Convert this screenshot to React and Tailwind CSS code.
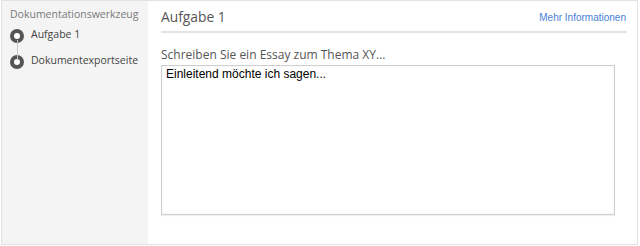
export default function App() {
  return (
    <div className="w-[637px] h-[245px] ml-[1px] flex border border-[#e2e2e2] bg-white" style={{ fontFamily: '"Open Sans", sans-serif' }}>
      <div className="w-[146px] shrink-0 bg-[#f4f4f4] pt-[4px] pl-[8px]">
        <div className="text-[10.5px] leading-[18px] text-[#7a7a7a]">Dokumentationswerkzeug</div>
        <div className="relative mt-[5px]">
          <div className="absolute left-[7px] top-[12px] w-[1px] h-[20px] bg-[#c8c8c8]" />
          <div className="flex items-center h-[16px]">
            <div className="w-[14px] h-[14px] rounded-full border-[4px] border-[#555] bg-white shrink-0" />
            <span className="ml-[7px] text-[10.5px] text-[#444] -mt-[3px]">Aufgabe 1</span>
          </div>
          <div className="flex items-center h-[16px] mt-[10px]">
            <div className="w-[14px] h-[14px] rounded-full border-[4px] border-[#555] bg-white shrink-0" />
            <span className="ml-[7px] text-[10.5px] text-[#444] -mt-[3px]">Dokumentexportseite</span>
          </div>
        </div>
      </div>
      <div className="flex-1 pl-[13px] pr-[10px] pt-[4px]">
        <div className="flex items-center justify-between border-b-2 border-[#e3e3e3] h-[28px]">
          <span className="text-[13.8px] text-[#555] -mt-[1px]">Aufgabe 1</span>
          <span className="text-[10px] text-[#4a7fd4] -mt-[2px] mr-[1px]" style={{ fontFamily: '"Liberation Sans", Arial, sans-serif' }}>Mehr Informationen</span>
        </div>
        <div className="mt-[13px] text-[12px] leading-[18px] text-[#555]">Schreiben Sie ein Essay zum Thema XY...</div>
        <div className="mt-[1px] w-[454px] h-[150px] border border-[#cfcfcf] shadow-[inset_0_0_2px_rgba(0,0,0,0.08),0_1px_1px_rgba(0,0,0,0.06)] px-[4px] pt-[1px] text-[12px] leading-[14px] text-black" style={{ fontFamily: '"Liberation Sans", Arial, sans-serif' }}>
          Einleitend möchte ich sagen...
        </div>
      </div>
    </div>
  );
}
